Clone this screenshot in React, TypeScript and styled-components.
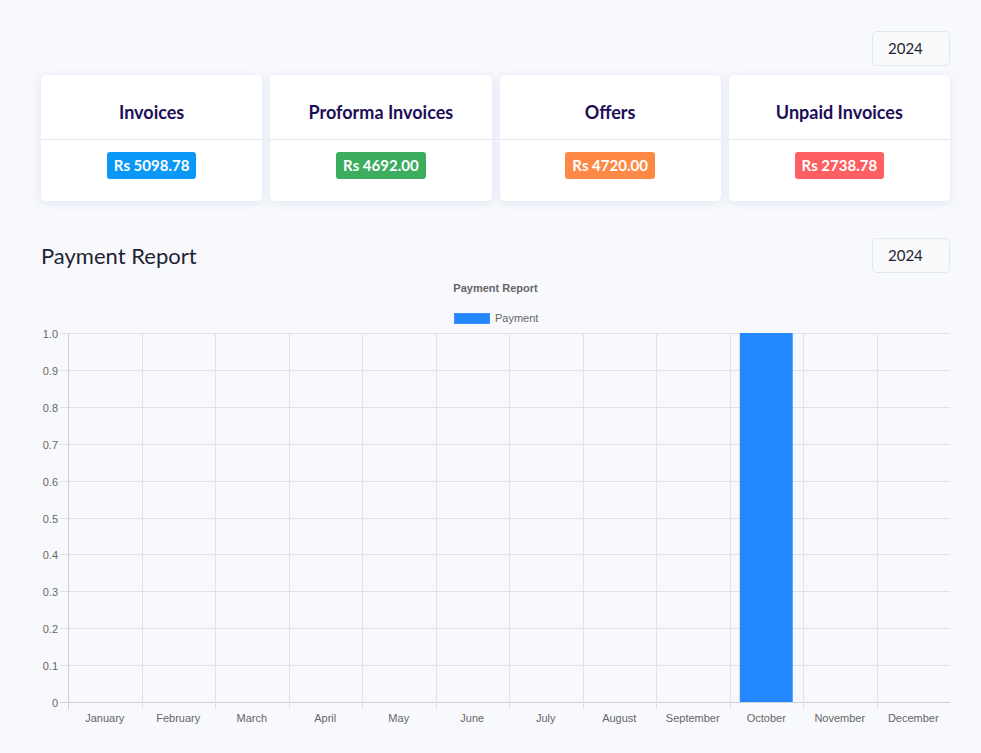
import React from "react";
import styled, { createGlobalStyle } from "styled-components";

const Global = createGlobalStyle`
  html, body { margin: 0; padding: 0; background: #f8f9fc; }
  body { font-family: Lato, "Noto Sans", sans-serif; color: #1f2433; }
  * { box-sizing: border-box; }
`;

const Page = styled.div`
  padding: 31px 31px 20px 41px;
  display: flex;
  flex-direction: column;
`;

const TopBar = styled.div`
  display: flex;
  justify-content: flex-end;
  margin-bottom: 9px;
`;

const YearSelect = styled.div`
  width: 78px;
  height: 35px;
  border: 1px solid #e1e6ef;
  border-radius: 5px;
  background: #f9fafc;
  font-size: 15px;
  line-height: 33px;
  padding-left: 15px;
  color: #1f2433;
`;

const Cards = styled.div`
  display: grid;
  grid-template-columns: repeat(4, 1fr);
  gap: 8px;
`;

const Card = styled.div`
  background: #fff;
  border-radius: 5px;
  box-shadow: 0 2px 10px rgba(180, 195, 225, 0.35);
  height: 126px;
  display: flex;
  flex-direction: column;
`;

const CardHead = styled.div`
  height: 65px;
  border-bottom: 1px solid #e3e6ee;
  display: flex;
  align-items: center;
  justify-content: center;
  font-size: 18px;
  font-weight: 700;
  color: #1d0e58;
  padding-top: 10px;
`;

const CardBody = styled.div`
  flex: 1;
  display: flex;
  justify-content: center;
  padding-top: 12px;
`;

const Badge = styled.span<{ $bg: string }>`
  background: ${(p) => p.$bg};
  color: #fff;
  font-size: 15px;
  font-weight: 700;
  height: 27px;
  line-height: 27px;
  padding: 0 7px;
  border-radius: 3px;
`;

const ReportHead = styled.div`
  display: flex;
  justify-content: space-between;
  align-items: center;
  margin-top: 37px;
`;

const ReportTitle = styled.h2`
  margin: 0;
  font-size: 22px;
  font-weight: 400;
  color: #1f2433;
`;

const ChartBox = styled.div`
  margin-top: 3px;
  width: 909px;
`;

const cards = [
  { title: "Invoices", amount: "Rs 5098.78", color: "#0a98f6" },
  { title: "Proforma Invoices", amount: "Rs 4692.00", color: "#3cad5e" },
  { title: "Offers", amount: "Rs 4720.00", color: "#fe8946" },
  { title: "Unpaid Invoices", amount: "Rs 2738.78", color: "#fe5f62" },
];

const months = [
  "January", "February", "March", "April", "May", "June",
  "July", "August", "September", "October", "November", "December",
];
const values = [0, 0, 0, 0, 0, 0, 0, 0, 0, 1, 0, 0];

function Chart() {
  const W = 909;
  const H = 455;
  const left = 27;
  const right = 909;
  const top = 57;
  const bottom = 426;
  const colW = (right - left) / 12;
  const yTicks = [0, 0.1, 0.2, 0.3, 0.4, 0.5, 0.6, 0.7, 0.8, 0.9, 1.0];
  const font = '"Liberation Sans", Arial, sans-serif';
  const yOf = (v: number) => bottom - v * (bottom - top);
  return (
    <svg width={W} height={H} viewBox={`0 0 ${W} ${H}`} style={{ display: "block" }}>
      <text x={454.5} y={16} textAnchor="middle" fontFamily={font} fontSize={11} fontWeight={700} fill="#666">
        Payment Report
      </text>
      <rect x={413.5} y={37.5} width={35} height={10} fill="#2388ff" stroke="#3b93ff" strokeWidth={1} />
      <text x={454} y={46} fontFamily={font} fontSize={11} fill="#666">
        Payment
      </text>
      {yTicks.map((v, i) => {
        const y = Math.round(yOf(v)) + 0.5;
        return (
          <g key={i}>
            <line x1={left - 8} x2={right} y1={y} y2={y} stroke={i === 0 ? "#cfcfd4" : "#e2e2e6"} strokeWidth={1} />
            <text x={left - 10} y={y + 4} textAnchor="end" fontFamily={font} fontSize={11} fill="#666">
              {v === 0 ? "0" : v.toFixed(1)}
            </text>
          </g>
        );
      })}
      {months.map((m, i) => {
        const x = Math.round(left + i * colW) + 0.5;
        return (
          <g key={m}>
            <line x1={x} x2={x} y1={top} y2={bottom + 7} stroke={i === 0 ? "#cfcfd4" : "#e2e2e6"} strokeWidth={1} />
            <text x={left + (i + 0.5) * colW} y={bottom + 20} textAnchor="middle" fontFamily={font} fontSize={11} fill="#666">
              {m}
            </text>
          </g>
        );
      })}
      {values.map((v, i) =>
        v > 0 ? (
          <rect
            key={i}
            x={left + i * colW + colW * 0.14}
            y={yOf(v)}
            width={colW * 0.72}
            height={bottom - yOf(v)}
            fill="#2388ff"
          />
        ) : null
      )}
    </svg>
  );
}

export default function App() {
  return (
    <>
      <Global />
      <Page>
        <TopBar>
          <YearSelect>2024</YearSelect>
        </TopBar>
        <Cards>
          {cards.map((c) => (
            <Card key={c.title}>
              <CardHead>{c.title}</CardHead>
              <CardBody>
                <Badge $bg={c.color}>{c.amount}</Badge>
              </CardBody>
            </Card>
          ))}
        </Cards>
        <ReportHead>
          <ReportTitle>Payment Report</ReportTitle>
          <YearSelect>2024</YearSelect>
        </ReportHead>
        <ChartBox>
          <Chart />
        </ChartBox>
      </Page>
    </>
  );
}
